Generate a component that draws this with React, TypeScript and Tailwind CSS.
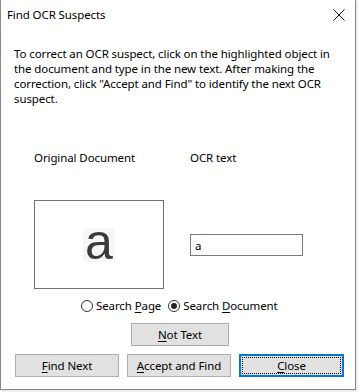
import React, { useState } from "react";

const ui = { fontFamily: '"Noto Sans", "Open Sans", sans-serif' };

function Btn({ label, u, focused }: { label: string; u: number; focused?: boolean }) {
  const pre = label.slice(0, u);
  const ch = label.charAt(u);
  const post = label.slice(u + 1);
  return (
    <button
      className={
        "h-[23px] bg-[#e1e1e1] text-[11.5px] tracking-[-0.1px] text-black flex items-center justify-center " +
        (focused ? "border-2 border-[#0078d7] p-[1px]" : "border border-[#adadad]")
      }
      style={{ width: focused ? 105 : 104 }}
    >
      <span
        className={
          "w-full h-full flex items-center justify-center " +
          (focused ? "border border-dotted border-black" : "")
        }
      >
        {pre}
        <span className="underline underline-offset-2">{ch}</span>
        {post}
      </span>
    </button>
  );
}

function Radio({ checked, label, u, onClick }: { checked: boolean; label: string; u: number; onClick: () => void }) {
  return (
    <label className="flex items-center gap-[3px] cursor-default" onClick={onClick}>
      <span className="w-[12px] h-[12px] rounded-full border border-[#333] bg-white flex items-center justify-center">
        {checked && <span className="w-[6px] h-[6px] rounded-full bg-[#222]" />}
      </span>
      <span className="text-[11.5px] tracking-[-0.1px] leading-[16px] text-black">
        {label.slice(0, u)}
        <span className="underline underline-offset-2">{label.charAt(u)}</span>
        {label.slice(u + 1)}
      </span>
    </label>
  );
}

export default function App() {
  const [scope, setScope] = useState<"page" | "doc">("doc");
  const [text, setText] = useState("a");

  return (
    <div className="w-[359px] h-[392px] bg-white" style={ui}>
      <div className="w-[356px] h-[390px] bg-white border-l border-r border-b border-[#8a8a8a] flex flex-col shadow-[1px_1px_2px_rgba(0,0,0,0.15)]">
        {/* title bar */}
        <div className="h-[30px] flex items-center justify-between pl-[6px] pr-[9px]">
          <span className="text-[11.5px] tracking-[-0.1px] text-black">Find OCR Suspects</span>
          <svg width="12" height="12" viewBox="0 0 12 12" className="mr-[1px]">
            <path d="M0.5 0.5 L11.5 11.5 M11.5 0.5 L0.5 11.5" stroke="#111" strokeWidth="1" />
          </svg>
        </div>

        <p className="px-[13px] pt-[16px] text-[11.5px] tracking-[-0.1px] leading-[15px] text-black">
          To correct an OCR suspect, click on the highlighted object in the document and type in the new text. After making the correction, click "Accept and Find" to identify the next OCR suspect.
        </p>

        <div className="flex pl-[33px] mt-[44px] text-[11.5px] tracking-[-0.1px] leading-[16px] text-black">
          <span className="w-[156px]">Original Document</span>
          <span>OCR text</span>
        </div>

        <div className="flex items-start pl-[33px] mt-[34px]">
          <div className="w-[130px] h-[89px] border border-[#707070] flex items-start justify-center">
            <div className="w-[32px] h-[34px] mt-[27px] bg-[#f7f7f5] flex items-start justify-center">
              <span
                className="block text-[50px] leading-none text-[#3a3a3a] blur-[0.6px] -mt-[11px]"
                style={{ fontFamily: '"Liberation Sans", Arial, sans-serif' }}
              >
                a
              </span>
            </div>
          </div>
          <input
            value={text}
            onChange={(e) => setText(e.target.value)}
            className="ml-[26px] mt-[34px] w-[113px] h-[22px] border border-[#7a7a7a] px-[4px] text-[11.5px] text-black outline-none"
          />
        </div>

        <div className="flex items-center pl-[80px] gap-[7px] mt-[9px]">
          <Radio checked={scope === "page"} label="Search Page" u={7} onClick={() => setScope("page")} />
          <Radio checked={scope === "doc"} label="Search Document" u={7} onClick={() => setScope("doc")} />
        </div>

        <div className="flex pl-[130px] mt-[9px]">
          <button className="w-[98px] h-[23px] bg-[#e1e1e1] border border-[#adadad] text-[11.5px] tracking-[-0.1px] text-black">
            <span className="underline underline-offset-2">N</span>ot Text
          </button>
        </div>

        <div className="flex items-center pl-[14px] gap-[8px] mt-[8px]">
          <Btn label="Find Next" u={0} />
          <Btn label="Accept and Find" u={0} />
          <Btn label="Close" u={0} focused />
        </div>
      </div>
    </div>
  );
}
